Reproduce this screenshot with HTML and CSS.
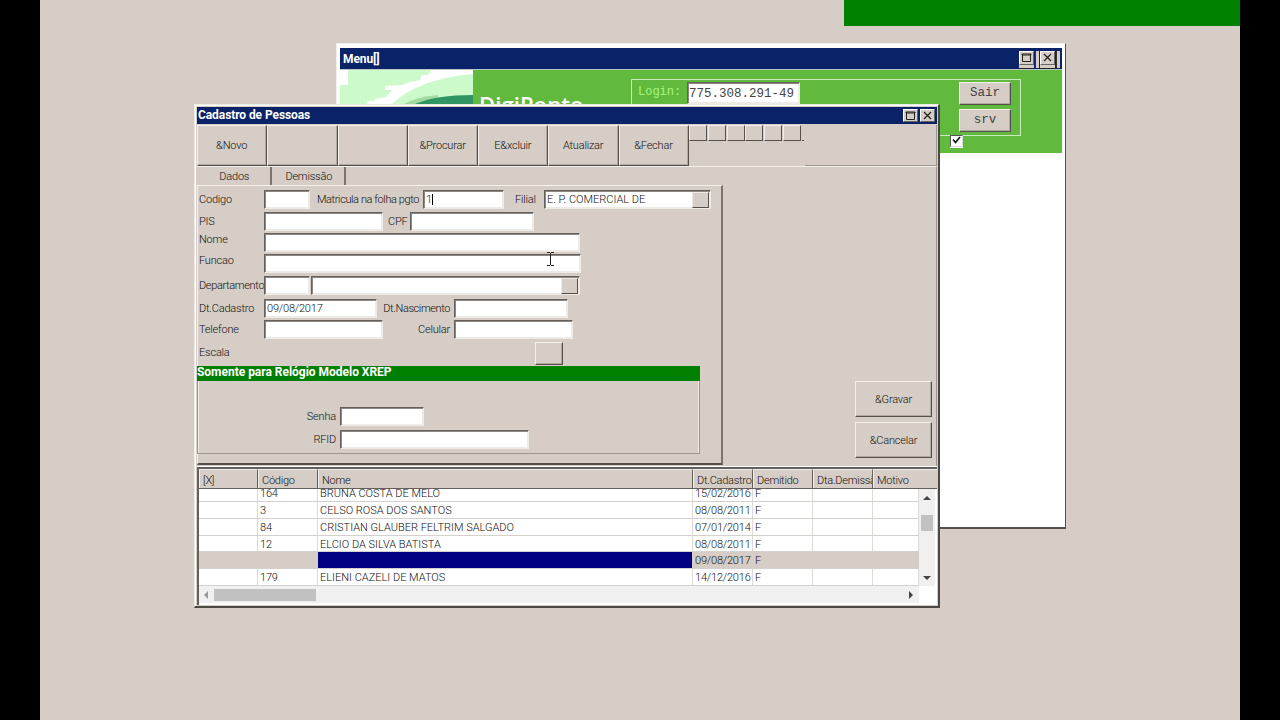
FILE: index.html
```html
<!DOCTYPE html>
<html lang="pt-BR">
<head>
    <meta charset="UTF-8">
    <meta name="viewport" content="width=device-width, initial-scale=1.0">
    <title>Cadastro de Pessoas</title>
    <link rel="stylesheet" href="styles.css">
</head>
<body>
    <div class="desktop">
        <div class="faixa"></div>

        <!-- Janela do menu, atrás -->
        <div class="janela menu">
            <div class="titulo">
                <span>Menu[]</span>
                <div class="controles">
                    <div class="controle"><svg width="13" height="12" viewBox="0 0 13 12"><path d="M2.500 2v7.500h8V2M2 2h9v1H2z" fill="none" stroke="#222"/></svg></div>
                    <div class="sombra-controle"></div>
                    <div class="controle"><svg width="13" height="12" viewBox="0 0 13 12"><path d="M3 2l7 7M10 2l-7 7" stroke="#222" stroke-width="1.300"/></svg></div>
                    <div class="sombra-controle"></div>
                </div>
            </div>
            <div class="topo">
                <svg class="logo" width="133" height="83" viewBox="0 0 133 83">
                    <path fill="#fff" d="M0 0h133v83H0z"/>
                    <path fill="#ccfacb" d="M8 0h83l-3 5h-6l-2 5-10 2-8 3-17 1v4h7l-6 7-11 2v2h-8l-2 8v30H0V15h8z"/>
                    <path fill="#ccfacb" d="M52 34Q78 9 133 4v50H52z"/>
                    <path fill="#a0dba0" d="M64 34Q76 27 98 25v15H64z"/>
                    <path fill="#2f9562" d="M75 34Q96 25 133 25v50H75z"/>
                </svg>
                <div class="marca">DigiPonto</div>
                <div class="login">
                    <label class="login-texto">Login:</label>
                    <div class="campo login-campo">775.308.291-49</div>
                    <div class="login-botoes">
                        <div class="botao">Sair</div>
                        <div class="botao">srv</div>
                    </div>
                </div>
                <div class="marcador"><svg width="11" height="10" viewBox="0 0 11 10"><path d="M2 3.500l2.500 3L9 1" fill="none" stroke="#111" stroke-width="1.600"/></svg></div>
            </div>
        </div>

        <!-- Janela de cadastro -->
        <div class="janela cadastro">
            <div class="titulo">
                <span>Cadastro de Pessoas</span>
                <div class="controles">
                    <div class="controle"><svg width="13" height="12" viewBox="0 0 13 12"><path d="M2.500 2v7.500h8V2M2 2h9v1H2z" fill="none" stroke="#222"/></svg></div>
                    <div class="controle"><svg width="13" height="12" viewBox="0 0 13 12"><path d="M3 2l7 7M10 2l-7 7" stroke="#222" stroke-width="1.300"/></svg></div>
                </div>
            </div>

            <div class="barra">
                <div class="botao">&amp;Novo</div>
                <div class="botao"></div>
                <div class="botao"></div>
                <div class="botao">&amp;Procurar</div>
                <div class="botao">E&amp;xcluir</div>
                <div class="botao">Atualizar</div>
                <div class="botao">&amp;Fechar</div>
                <div class="navegador">
                    <i></i><i></i><i></i><i></i><i></i><i></i><b></b>
                </div>
                <div class="resto"></div>
            </div>

            <div class="corpo">
                <div class="esquerda">
                    <div class="abas">
                        <div class="aba">Dados</div>
                        <div class="aba">Demissão</div>
                    </div>
                    <div class="painel">
                        <div class="linha l-codigo">
                            <label class="rotulo">Codigo</label>
                            <div class="campo w46"></div>
                            <label class="rotulo-matricula">Matricula na folha pgto</label>
                            <div class="campo w81 foco">1</div>
                            <label class="rotulo-filial">Filial</label>
                            <div class="campo w167"><span class="filial">E. P. COMERCIAL DE</span><span class="seta"></span></div>
                        </div>
                        <div class="linha l-pis">
                            <label class="rotulo">PIS</label>
                            <div class="campo w119"></div>
                            <label class="rotulo-cpf">CPF</label>
                            <div class="campo w124"></div>
                        </div>
                        <div class="linha l-nome">
                            <label class="rotulo acima">Nome</label>
                            <div class="campo w316"></div>
                        </div>
                        <div class="linha l-funcao">
                            <label class="rotulo acima">Funcao</label>
                            <div class="campo w317"></div>
                        </div>
                        <div class="linha l-depto">
                            <label class="rotulo">Departamento</label>
                            <div class="campo w46"></div>
                            <div class="campo w269"><span class="seta"></span></div>
                        </div>
                        <div class="linha l-datas">
                            <label class="rotulo">Dt.Cadastro</label>
                            <div class="campo w113">09/08/2017</div>
                            <label class="rotulo-direita">Dt.Nascimento</label>
                            <div class="campo w114"></div>
                        </div>
                        <div class="linha l-fones">
                            <label class="rotulo">Telefone</label>
                            <div class="campo w119"></div>
                            <label class="rotulo-direita celular">Celular</label>
                            <div class="campo w119"></div>
                        </div>
                        <div class="linha l-escala">
                            <label class="rotulo">Escala</label>
                            <div class="botao botao-escala"></div>
                        </div>
                        <div class="xrep">
                            <div class="xrep-titulo">Somente para Relógio Modelo XREP</div>
                            <div class="xrep-corpo">
                                <div class="xrep-linha">
                                    <label>Senha</label>
                                    <div class="campo w84"></div>
                                </div>
                                <div class="xrep-linha">
                                    <label>RFID</label>
                                    <div class="campo w189"></div>
                                </div>
                            </div>
                        </div>
                    </div>
                </div>
                <div class="acoes">
                    <div class="botao">&amp;Gravar</div>
                    <div class="botao">&amp;Cancelar</div>
                </div>
            </div>

            <div class="grade">
                <div class="grade-cabecalho">
                    <div>[X]</div><div>Código</div><div>Nome</div><div>Dt.Cadastro</div><div>Demitido</div><div>Dta.Demissão</div><div>Motivo</div>
                </div>
                <div class="grade-meio">
                    <div class="registros">
                        <div class="registro"><div></div><div>164</div><div>BRUNA COSTA DE MELO</div><div>15/02/2016</div><div>F</div><div></div><div></div></div>
                        <div class="registro"><div></div><div>3</div><div>CELSO ROSA DOS SANTOS</div><div>08/08/2011</div><div>F</div><div></div><div></div></div>
                        <div class="registro"><div></div><div>84</div><div>CRISTIAN GLAUBER FELTRIM SALGADO</div><div>07/01/2014</div><div>F</div><div></div><div></div></div>
                        <div class="registro"><div></div><div>12</div><div>ELCIO DA SILVA BATISTA</div><div>08/08/2011</div><div>F</div><div></div><div></div></div>
                        <div class="registro atual"><div></div><div></div><div class="selecionado"></div><div>09/08/2017</div><div>F</div><div></div><div></div></div>
                        <div class="registro"><div></div><div>179</div><div>ELIENI CAZELI DE MATOS</div><div>14/12/2016</div><div>F</div><div></div><div></div></div>
                    </div>
                    <div class="rolagem-v">
                        <svg width="8" height="4" viewBox="0 0 8 4"><path d="M0 4l4-4 4 4z" fill="#444"/></svg>
                        <div class="polegar-v"></div>
                        <svg width="8" height="4" viewBox="0 0 8 4"><path d="M0 0l4 4 4-4z" fill="#444"/></svg>
                    </div>
                </div>
                <div class="rolagem-h">
                    <svg width="4" height="8" viewBox="0 0 4 8"><path d="M4 0L0 4l4 4z" fill="#999"/></svg>
                    <div class="polegar-h"></div>
                    <svg width="4" height="8" viewBox="0 0 4 8"><path d="M0 0l4 4-4 4z" fill="#444"/></svg>
                </div>
            </div>
        </div>

        <svg class="cursor" width="9" height="16" viewBox="0 0 9 16"><path d="M1 1.500h3M5 1.500h3M4.500 2v12M1 14.500h3M5 14.500h3" fill="none" stroke="#222"/></svg>
    </div>
</body>
</html>
```

FILE: styles.css
```css
* {
    box-sizing: border-box;
    margin: 0;
    padding: 0;
}

body {
    background-color: #000;
    font-family: Roboto, "Liberation Sans", sans-serif;
    font-size: 11px;
    font-weight: 300;
    letter-spacing: -0.200px;
    line-height: 13px;
    color: #111;
    height: 720px;
    overflow: hidden;
}

.desktop {
    position: relative;
    width: 1200px;
    height: 720px;
    margin: 0 auto;
    background-color: #d5cdc6;
}

.faixa {
    width: 396px;
    height: 26px;
    margin-left: auto;
    background-color: #007f00;
}

/* janelas */
.janela {
    position: absolute;
    display: flex;
    flex-direction: column;
}

.titulo {
    display: flex;
    align-items: center;
    justify-content: space-between;
    background-color: #0a2268;
    color: #fff;
    font-weight: bold;
    font-size: 12px;
    letter-spacing: -0.080px;
    flex-shrink: 0;
}

.controles {
    display: flex;
}

.controle {
    width: 15px;
    height: 13px;
    background-color: #d5cdc6;
    border: 1px solid;
    border-color: #fff #666 #666 #fff;
}

.controle svg {
    display: block;
}

.botao {
    display: flex;
    align-items: center;
    justify-content: center;
    background-color: #d5cdc6;
    border: 1px solid;
    border-color: #f4f0ec #55504c #55504c #f4f0ec;
    box-shadow: inset -1px -1px #b0a9a3;
}

.campo {
    height: 19px;
    background-color: #fff;
    border: 1px solid;
    border-color: #65605c #eeeae6 #eeeae6 #65605c;
    box-shadow: inset 1px 1px #8d8884, inset -1px -1px #eeeae6;
    display: flex;
    align-items: center;
    padding: 1px 2px 1px 2px;
    flex-shrink: 0;
}

/* menu */
.menu {
    left: 296px;
    top: 43px;
    width: 730px;
    height: 486px;
    background-color: #fff;
    border: 1px solid;
    border-color: #eee #55504c #55504c #eee;
    border-width: 1px 1px 2px 1px;
    padding: 4px 3px 0 3px;
}

.menu .titulo {
    height: 21px;
    padding: 2px 1px 0 3px;
}

.menu .controles {
    height: 19px;
    align-items: flex-start;
    padding-top: 1px;
}

.menu .controle {
    height: 14px;
    box-shadow: 0 3px #d5cdc6, 0 4px #222;
}

.sombra-controle {
    width: 4px;
    height: 17px;
    margin: 0 1px;
    background-color: #d5cdc6;
    border-left: 1px solid #333;
}

.topo {
    display: flex;
    height: 84px;
    background-color: #61ba3e;
    border-top: 1px solid #b9c8c4;
}

.logo {
    flex-shrink: 0;
}

.marca {
    width: 158px;
    padding: 21px 0 0 6px;
    font-family: "Open Sans", "Liberation Sans", sans-serif;
    font-size: 22px;
    letter-spacing: 0.100px;
    line-height: 26px;
    font-weight: 600;
    color: #fff;
}

.login {
    display: flex;
    width: 390px;
    height: 57px;
    margin-top: 9px;
    border: 1px solid #ccebbd;
    padding: 2px 9px 0 6px;
    font-family: "Liberation Mono", monospace;
    letter-spacing: 0;
}

.login-texto {
    width: 49px;
    padding-top: 4px;
    font-size: 12px;
    color: #a5f481;
}

.login-campo {
    width: 113px;
    height: 22px;
    padding: 3px 0 0 1px;
    font-size: 12.500px;
    color: #444;
}

.login-botoes {
    display: flex;
    flex-direction: column;
    gap: 4px;
    width: 52px;
    margin-left: auto;
    font-size: 12.500px;
}

.login-botoes .botao {
    height: 23px;
    color: #444;
}

.marcador {
    width: 13px;
    height: 12px;
    margin: 65px 0 0 -71px;
    background-color: #fff;
    border: 1px solid;
    border-color: #555 #ddd #ddd #555;
    box-shadow: 0 1px #fff;
}

.marcador svg {
    display: block;
}

/* cadastro */
.cadastro {
    left: 154px;
    top: 104px;
    width: 746px;
    height: 504px;
    background-color: #d5cdc6;
    border: 1px solid;
    border-color: #eeeae6 #4c4844 #4c4844 #eeeae6;
    border-width: 1px 2px 2px 1px;
    padding: 2px 1px 0 2px;
    box-shadow: inset 1px 1px #fff;
}

.cadastro .titulo {
    height: 17px;
    padding: 0 2px 1px 1px;
}

.cadastro .controles {
    gap: 2px;
}

.barra {
    display: flex;
    height: 42px;
    padding-top: 1px;
    flex-shrink: 0;
}

.barra .botao {
    width: 70.300px;
    padding-right: 1px;
    flex-shrink: 0;
}

.navegador {
    display: flex;
    width: 116px;
}

.navegador i {
    width: 18px;
    height: 16px;
    margin-right: 0.800px;
    border: 1px solid;
    border-color: #eee #55504c #55504c #eee;
}

.navegador b {
    width: 2px;
    height: 1px;
    margin-top: 15px;
    background-color: #55504c;
}

.resto {
    flex-grow: 1;
    border-right: 1px solid #9c9590;
    border-bottom: 1px solid #9c9590;
}

.corpo {
    display: flex;
    height: 300px;
    border-top: 1px solid #f4f0ec;
    border-right: 1px solid #9c9590;
    flex-shrink: 0;
}

.esquerda {
    width: 526px;
}

.abas {
    display: flex;
    height: 18px;
}

.aba {
    width: 74.500px;
    text-align: center;
    padding: 3px 0 0 2px;
    border-right: 2px solid #7a7571;
}

.painel {
    height: 280px;
    border: 1px solid;
    border-width: 1px 2px 2px 1px;
    border-color: #f4f0ec #7a7571 #55504c #f4f0ec;
    padding-top: 4px;
}

.linha {
    display: flex;
    align-items: flex-start;
}

.linha > label,
.xrep-linha > label {
    white-space: nowrap;
    flex-shrink: 0;
    padding-top: 3px;
}

.rotulo {
    width: 66px;
    padding-left: 1px;
}

.linha > .acima {
    padding-top: 0;
}

.l-codigo { height: 22px; }
.l-pis { height: 21px; }
.l-nome { height: 21px; }
.l-funcao { height: 22px; }
.l-depto { height: 23px; gap: 1px; }
.l-depto .rotulo { width: 65px; letter-spacing: -0.350px; }
.l-datas { height: 21px; }
.l-datas .rotulo-direita { letter-spacing: -0.400px; }
.l-fones { height: 22px; }
.l-escala { height: 24px; }
.l-escala .rotulo { padding-top: 4px; }

.rotulo-matricula { width: 113px; padding-left: 7px; letter-spacing: -0.400px; }
.rotulo-filial { width: 40px; padding-left: 11px; }
.rotulo-cpf { width: 27px; padding-left: 5px; }
.rotulo-direita { width: 77px; padding-right: 4px; text-align: right; }
.rotulo-direita.celular { width: 71px; }

.w46 { width: 46px; }
.w81 { width: 81px; }
.w84 { width: 84px; }
.w113 { width: 113px; }
.w114 { width: 114px; }
.w119 { width: 119px; }
.w124 { width: 124px; }
.w167 { width: 167px; }
.w189 { width: 189px; }
.w269 { width: 269px; }
.w316 { width: 316px; }
.w317 { width: 317px; }

.foco::after {
    content: "";
    width: 1px;
    height: 11px;
    background-color: #000;
}

.filial {
    letter-spacing: 0;
}

.seta {
    width: 17px;
    height: 16px;
    margin: 0 -1px 0 auto;
    background-color: #d5cdc6;
    border: 1px solid;
    border-color: #eeeae6 #55504c #55504c #eeeae6;
}

.botao-escala {
    width: 28px;
    height: 23px;
    margin-left: 271px;
}

.xrep {
    width: 503px;
    margin-left: -1px;
}

.xrep-titulo {
    height: 15px;
    background-color: #007f00;
    color: #fff;
    font-size: 12px;
    font-weight: bold;
    letter-spacing: -0.020px;
}

.xrep-corpo {
    height: 73px;
    padding-top: 26px;
    border: 1px solid #9c9590;
    border-top: none;
    box-shadow: inset 1px 0 #eeeae6, inset -1px 0 #eeeae6;
}

.xrep-linha {
    display: flex;
    height: 23px;
}

.xrep-linha label {
    width: 142px;
    padding-right: 4px;
    text-align: right;
}

.acoes {
    display: flex;
    flex-direction: column;
    gap: 5px;
    width: 77px;
    margin: 214px 4px 0 auto;
}

.acoes .botao {
    height: 36px;
}

/* grade */
.grade {
    height: 138px;
    border-top: 2px solid #65605c;
    border-left: 2px solid #65605c;
    box-shadow: 0 -1px #fff;
    background-color: #fff;
    margin-top: 1px;
}

.grade-cabecalho,
.registro {
    display: grid;
    grid-template-columns: 59px 60px 375px 60px 60px 60px 1fr;
}

.grade-cabecalho {
    height: 20px;
    background-color: #d5cdc6;
    border-bottom: 1px solid #65605c;
}

.grade-cabecalho div {
    padding: 4px 0 0 3px;
    border-right: 1px solid #65605c;
    border-top: 1px solid #eee;
    border-left: 1px solid #eee;
    overflow: hidden;
    white-space: nowrap;
    letter-spacing: -0.250px;
}

.grade-cabecalho div:last-child {
    border-right: none;
}

.grade-meio {
    display: flex;
    height: 97px;
}

.registros {
    display: flex;
    flex-direction: column;
    justify-content: flex-end;
    width: 720px;
    overflow: hidden;
}

.registro {
    height: 16.800px;
    flex-shrink: 0;
    border-bottom: 1px solid #d4d0cc;
}

.registro div {
    padding: 2px 0 0 2px;
    border-right: 1px solid #ddd9d6;
    white-space: nowrap;
}

.registro div:nth-child(3) {
    letter-spacing: 0;
}

.atual {
    background-color: #d5cdc6;
}

.atual div {
    border-right-color: #d5cdc6;
}

.atual .selecionado {
    background-color: #000080;
}

.rolagem-v {
    display: flex;
    flex-direction: column;
    align-items: center;
    width: 16px;
    padding: 7px 0 6px;
    background-color: #f0f0f0;
}

.polegar-v {
    width: 12px;
    height: 16px;
    margin: 15px 0 auto;
    background-color: #c1c1c1;
}

.rolagem-h {
    display: flex;
    align-items: center;
    width: 720px;
    height: 17px;
    padding: 0 6px 0 5px;
    background-color: #f0f0f0;
}

.polegar-h {
    width: 102px;
    height: 12px;
    margin: 0 auto 0 6px;
    background-color: #c1c1c1;
}

.cursor {
    position: absolute;
    left: 506px;
    top: 251px;
}
```
